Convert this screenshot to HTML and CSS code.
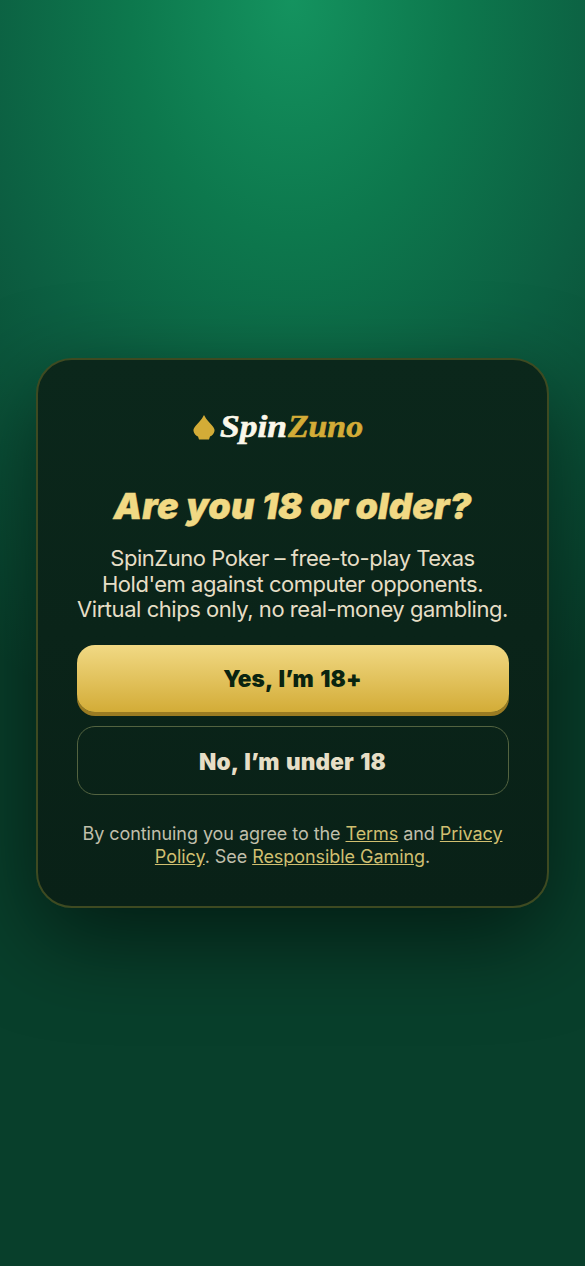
FILE: index.html
```html
<!DOCTYPE html>
<html lang="en">
<head>
<meta charset="utf-8">
<title>SpinZuno</title>
<link rel="stylesheet" href="styles.css">
</head>
<body>
<main class="gate">
  <section class="card">
    <div class="logo">
      <svg class="spade" viewBox="0 0 22 25"><path d="M11 0C8.500 5 5 8 2.500 11C.8 13 .3 14.500 .5 16C.8 18.500 3 20.800 5 21.500L6 24.500H16L17 21.500C19 20.800 21.200 18.500 21.500 16C21.700 14.500 21.200 13 19.500 11C17 8 13.500 5 11 0z"/></svg>
      <svg class="wordmark" viewBox="0 0 146 36"><text x="1" y="22" textLength="67" lengthAdjust="spacingAndGlyphs" class="spin">Spin</text><text x="69" y="22" textLength="75" lengthAdjust="spacingAndGlyphs" class="zuno">Zuno</text></svg>
    </div>
    <h1 class="title">Are you 18 or older?</h1>
    <p class="intro">SpinZuno Poker – free-to-play Texas<br>Hold'em against computer opponents.<br>Virtual chips only, no real-money gambling.</p>
    <button class="btn yes">Yes, I’m 18+</button>
    <button class="btn no">No, I’m under 18</button>
    <p class="legal">By continuing you agree to the <a>Terms</a> and <a>Privacy</a><br><a>Policy</a>. See <a>Responsible Gaming</a>.</p>
  </section>
</main>
</body>
</html>
```
FILE: styles.css
```css
* { box-sizing: border-box; }
body { margin: 0; font-family: Inter, sans-serif; }
.gate {
  height: 1266px;
  display: flex;
  align-items: center;
  justify-content: center;
  overflow: hidden;
  background: radial-gradient(ellipse 540px 780px at 50% 0, #14935f 0%, #0d784d 30%, #0c5e41 60%, #083f2b 100%);
}
.card {
  width: 513px;
  height: 550px;
  border: 2px solid #3e4a21;
  border-radius: 36px;
  padding: 51px 38px 0;
  background: linear-gradient(#0b271b, #092117);
  box-shadow: 0 30px 90px rgba(0, 0, 0, .55);
  text-align: center;
  white-space: nowrap;
}
.logo { display: flex; height: 42px; padding: 4px 0 0 117px; }
.spade { width: 22px; height: 25px; fill: #d3ac37; }
.wordmark { width: 146px; height: 36px; margin-left: 4px; overflow: visible; }
.spin, .zuno { font: italic bold 30.500px "Liberation Serif", serif; stroke-width: .6px; }
.spin { fill: #fbf7ea; stroke: #fbf7ea; }
.zuno { fill: #d3ac37; stroke: #d3ac37; }
.title { margin: 32px 0 0; font-size: 36px; line-height: 43px; font-weight: 900; font-style: italic; color: #f1d984; letter-spacing: .1px; -webkit-text-stroke: .4px #f1d984; }
.intro { margin: 18px 0 0; font-size: 22px; line-height: 25.500px; color: #e6dec6; letter-spacing: -.46px; }
.btn { display: block; width: 432px; height: 69px; margin: 0 0 0 .5px; padding: 0; border-radius: 18px; font: 900 22.500px Inter, sans-serif; letter-spacing: .2px; word-spacing: 1.500px; }
.yes { margin-top: 22.500px; border: 0; height: 67px; color: #0a2410; background: linear-gradient(#f1d984, #d3ac37); box-shadow: 0 4px 0 #9a7b22; }
.no { margin-top: 14px; border: 1.500px solid #536340; color: #e6dec6; background: transparent; padding-top: 1px; }
.legal { margin: 27px 0 0; font-size: 18px; line-height: 23px; color: #c0bfab; letter-spacing: -.06px; }
.legal a { color: #d0bf70; text-decoration: underline; }
```
